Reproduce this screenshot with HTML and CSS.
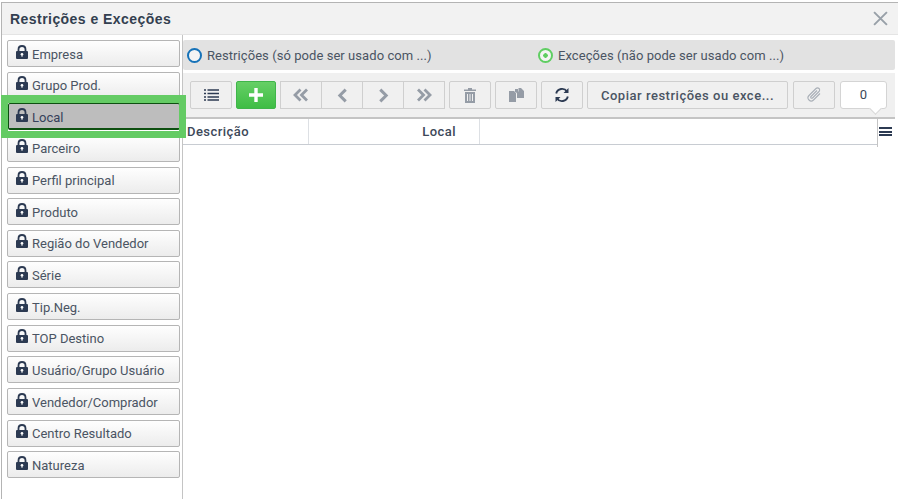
FILE: index.html
```html
<!DOCTYPE html>
<html lang="pt">
<head>
<meta charset="utf-8">
<title>Restrições e Exceções</title>
<link rel="stylesheet" href="styles.css">
</head>
<body>
<svg width="0" height="0" class="defs">
  <symbol id="lock" viewBox="0 0 12 14"><path fill="none" stroke="#2c3a52" stroke-width="1.800" d="M2.500 7V4.500C2.500 2.300 4 1 6 1s3.500 1.300 3.500 3.500V7"/><path fill="#2c3a52" d="M1 6h10a1 1 0 0 1 1 1v6a1 1 0 0 1-1 1H1a1 1 0 0 1-1-1V7a1 1 0 0 1 1-1Z"/><circle cx="6" cy="9.300" r="1.300" fill="#fff"/><rect x="5.500" y="9.500" width="1" height="2.300" fill="#fff"/></symbol>
</svg>
<div class="dialog">
  <header class="title-bar">
    <h1>Restrições e Exceções</h1>
    <svg class="close" viewBox="0 0 14 14"><path d="M1 1l12 12M13 1L1 13" stroke="#98a0a8" stroke-width="1.800" fill="none"/></svg>
  </header>
  <div class="content">
    <nav class="side">
      <button class="side-btn"><svg class="lock"><use href="#lock"/></svg>Empresa</button>
      <button class="side-btn"><svg class="lock"><use href="#lock"/></svg>Grupo Prod.</button>
      <button class="side-btn active"><svg class="lock"><use href="#lock"/></svg>Local</button>
      <button class="side-btn"><svg class="lock"><use href="#lock"/></svg>Parceiro</button>
      <button class="side-btn"><svg class="lock"><use href="#lock"/></svg>Perfil principal</button>
      <button class="side-btn"><svg class="lock"><use href="#lock"/></svg>Produto</button>
      <button class="side-btn"><svg class="lock"><use href="#lock"/></svg>Região do Vendedor</button>
      <button class="side-btn"><svg class="lock"><use href="#lock"/></svg>Série</button>
      <button class="side-btn"><svg class="lock"><use href="#lock"/></svg>Tip.Neg.</button>
      <button class="side-btn"><svg class="lock"><use href="#lock"/></svg>TOP Destino</button>
      <button class="side-btn"><svg class="lock"><use href="#lock"/></svg>Usuário/Grupo Usuário</button>
      <button class="side-btn"><svg class="lock"><use href="#lock"/></svg>Vendedor/Comprador</button>
      <button class="side-btn"><svg class="lock"><use href="#lock"/></svg>Centro Resultado</button>
      <button class="side-btn"><svg class="lock"><use href="#lock"/></svg>Natureza</button>
      <div class="highlight"></div>
    </nav>
    <main class="main">
      <div class="radio-bar">
        <label class="radio-opt first"><span class="radio blue"></span>Restrições (só pode ser usado com ...)</label>
        <label class="radio-opt"><span class="radio green"></span>Exceções (não pode ser usado com ...)</label>
      </div>
      <div class="toolbar">
        <button class="tool w42"><svg viewBox="0 0 15 12" width="15" height="12"><path d="M0 1h2M3.500 1H15M0 4.500h2M3.500 4.500H15M0 8h2M3.500 8H15M0 11h2M3.500 11H15" stroke="#2c3a52" stroke-width="1.300"/></svg></button>
        <button class="tool add"><svg viewBox="0 0 14 14" width="14" height="14"><path d="M7 0v14M0 7h14" stroke="#fff" stroke-width="3.400"/></svg></button>
        <div class="group">
          <button class="tool w41"><svg viewBox="0 0 16 14" width="16" height="14"><path d="M7.500 1.500L2 7l5.500 5.500M14 1.500L8.500 7l5.500 5.500" stroke="#959ca6" stroke-width="2.800" fill="none"/></svg></button>
          <button class="tool w41"><svg viewBox="0 0 10 14" width="11" height="15"><path d="M8 1.500L2.500 7 8 12.500" stroke="#959ca6" stroke-width="2.800" fill="none"/></svg></button>
          <button class="tool w41"><svg viewBox="0 0 10 14" width="11" height="15"><path d="M2 1.500L7.500 7 2 12.500" stroke="#959ca6" stroke-width="2.800" fill="none"/></svg></button>
          <button class="tool w41"><svg viewBox="0 0 16 14" width="16" height="14"><path d="M2 1.500L7.500 7 2 12.500M8.500 1.500L14 7l-5.500 5.500" stroke="#959ca6" stroke-width="2.800" fill="none"/></svg></button>
        </div>
        <button class="tool w42"><svg viewBox="0 0 12 15" width="12" height="15"><path fill="#959ca6" d="M4 0h4v1.500h4v1.500H0V1.500h4ZM1 4h10v11H1Z"/><path d="M3.500 6v7M6 6v7M8.500 6v7" stroke="#f0f0f0" stroke-width="1"/></svg></button>
        <button class="tool w42"><svg viewBox="0 0 15 14" width="15" height="14"><path fill="#959ca6" d="M0 3h5l2 2v9H0ZM6 1h3v3H6ZM9.500 0H12l3 3v7H8V5.500L6.500 3.500H9.500Z"/></svg></button>
        <button class="tool w42"><svg viewBox="0 0 16 16" width="16" height="16"><path d="M2.200 6.500A6 6 0 0 1 13 4.500M13.800 9.500A6 6 0 0 1 3 11.500" stroke="#2c3a52" stroke-width="1.900" fill="none"/><path fill="#2c3a52" d="M14.500 1v5h-5ZM1.500 15v-5h5Z"/></svg></button>
        <button class="tool copy">Copiar restrições ou exce...</button>
        <button class="tool w42 clip"><svg viewBox="0 0 16 16" width="16" height="16"><path d="M14 6.500L7.500 13a3 3 0 0 1-4.500-4.500L10 1.500a2 2 0 0 1 3 3L6.500 11a1 1 0 0 1-1.500-1.500L11 3.500" stroke="#a9afb7" stroke-width="1.100" fill="none"/></svg></button>
        <div class="count">0</div>
      </div>
      <div class="table-head">
        <div class="col desc">Descrição</div>
        <div class="col local">Local</div>
        <div class="col rest"><span class="menu"></span></div>
      </div>
    </main>
  </div>
</div>
</body>
</html>
```

FILE: styles.css
```css
* { box-sizing: border-box; }
html, body { margin: 0; height: 100%; overflow: hidden; background: #fff; }
body { font-family: Roboto, "Liberation Sans", sans-serif; color: #3d4859; padding: 2px 0 0 1px; }
.defs { position: absolute; }
.dialog { height: 497px; border-top: 1px solid #b4b4b4; border-left: 1px solid #b4b4b4; display: flex; flex-direction: column; }
.title-bar { height: 32px; flex: none; background: #f2f2f2; border-bottom: 1px solid #e4e4e4; display: flex; align-items: center; justify-content: space-between; padding: 0 10px 0 8px; }
h1 { margin: 0; font: 700 14px "Liberation Sans", Arial, sans-serif; color: #333f50; letter-spacing: .45px; }
.close { width: 15px; height: 15px; }
.content { flex: 1; display: flex; min-height: 0; }
.side { width: 181px; flex: none; position: relative; padding: 5px 2px 0 5px; border-right: 1px solid #c4c4c4; display: flex; flex-direction: column; gap: 4.65px; }
.side-btn { height: 27px; flex: none; width: 100%; border: 1px solid #b5b5b5; border-radius: 2px; background: linear-gradient(#fefefe, #ececec); display: flex; align-items: center; padding: 1px 0 0 8px; font: 13px Roboto, "Liberation Sans", sans-serif; color: #4a5463; }
.side-btn.active { background: #bdbdbd; border-color: #0d4f10; border-width: 1px 1px 2px 1px; color: #36415a; position: relative; z-index: 2; margin-left: 1px; width: calc(100% - 1px); padding: 2px 0 0 7px; }
.lock { width: 12px; height: 14px; margin-right: 4px; margin-top: -5px; flex: none; }
.highlight { position: absolute; left: -1px; top: 60px; width: 185px; height: 43px; border: solid #64cb64; border-width: 8px 7px 7px 7px; z-index: 3; pointer-events: none; }
.main { flex: 1; min-width: 0; padding: 5px 3px 0 0; display: flex; flex-direction: column; }
.radio-bar { height: 30px; flex: none; background: #e2e2e2; border-radius: 2px; display: flex; align-items: center; padding-left: 4px; font-size: 13px; letter-spacing: .06px; color: #4a5463; }
.radio-opt { display: flex; align-items: center; gap: 5px; }
.radio-opt.first { width: 351px; }
.radio { width: 15px; height: 15px; border-radius: 50%; background: #f4f4f4; flex: none; }
.radio.blue { border: 2px solid #1672b8; }
.radio.green { border: 2px solid #5fce62; background: radial-gradient(circle, #5fce62 0 2px, #f4f4f4 2.500px); }
.toolbar { height: 46px; flex: none; margin-top: 3px; background: #f0f0f0; border-bottom: 2px solid #c4c4c4; display: flex; align-items: flex-start; padding: 8px 0 0 7px; gap: 4px; }
.tool { height: 28px; border: 1px solid #cfcfcf; border-radius: 2px; background: #f0f0f0; display: flex; align-items: center; justify-content: center; padding: 0; flex: none; }
.w42 { width: 42px; }
.w41 { width: 42px; border-radius: 0; margin-left: -1px; }
.w41:first-child { margin-left: 0; }
.add { width: 40px; border-color: #3fb54a; background: linear-gradient(#66cf66, #3ebd44); }
.group { display: flex; }
.copy { width: 201px; font: 500 13px Roboto, "Liberation Sans", sans-serif; letter-spacing: .52px; color: #4a5463; }
.clip { margin-left: 1px; }
.count { width: 47px; height: 28px; flex: none; margin-left: 1px; background: #fff; border: 1px solid #d4d4d4; border-radius: 3px; text-align: center; font-size: 13px; line-height: 26px; position: relative; }
.count::after { content: ""; position: absolute; right: 6px; bottom: -5px; width: 8px; height: 8px; background: #fff; border-right: 1px solid #d4d4d4; border-bottom: 1px solid #d4d4d4; transform: rotate(45deg); }
.table-head { height: 26px; flex: none; display: flex; width: 695px; border-bottom: 1px solid #c8ccd2; border-right: 1px solid #c4c4c4; font-size: 13px; font-weight: 500; letter-spacing: .45px; color: #3d4859; background: #fff; position: relative; }
.col { height: 25px; line-height: 25px; border-right: 1px solid #dde0e4; }
.desc { width: 126px; padding-left: 4px; }
.local { width: 171px; text-align: right; padding-right: 23px; }
.rest { flex: 1; border-right: 0; }
.menu { position: absolute; right: -15px; top: 8px; width: 13px; height: 9px; border-top: 2px solid #2c3a52; border-bottom: 2px solid #2c3a52; }
.menu::after { content: ""; position: absolute; left: 0; right: 0; top: 1.500px; height: 2px; background: #2c3a52; }
.table-head::after { content: ""; position: absolute; right: -1px; top: 25px; width: 1px; height: 3px; background: #c4c4c4; }
```
